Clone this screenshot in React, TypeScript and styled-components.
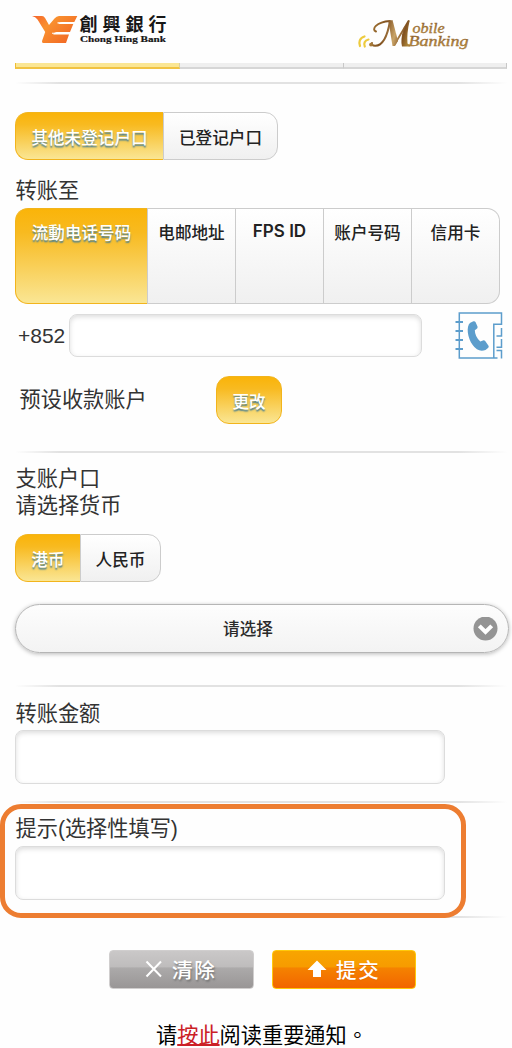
import React from "react";
import styled, { createGlobalStyle, css } from "styled-components";

const GlobalStyle = createGlobalStyle`
  * { box-sizing: border-box; }
  body {
    margin: 0;
    background: #fefefe;
    font-family: "Liberation Sans", "Noto Sans CJK SC", sans-serif;
    color: #333;
  }
`;

const Page = styled.main`
  width: 512px;
  height: 1048px;
  overflow: hidden;
  display: flex;
  flex-direction: column;
`;

const Header = styled.header`
  height: 63px;
  flex: none;
  display: flex;
  justify-content: space-between;
  padding: 10px 38px 0 30px;
`;

const Progress = styled.div`
  display: grid;
  grid-template-columns: 165px 164px 163px;
  height: 6px;
  flex: none;
  margin-left: 15px;
`;

const Step = styled.div<{ $active?: boolean }>`
  background: ${(p) => (p.$active ? "#fae694" : "#efefef")};
  border-right: 1px solid ${(p) => (p.$active ? "#d8cfa8" : "#c8c8c8")};
  border-bottom: 2px solid ${(p) => (p.$active ? "#f1c342" : "#d6d6d6")};
  border-left: ${(p) => (p.$active ? "1px solid #efbd33" : "0")};
`;

const Divider = styled.hr<{ $top: number }>`
  flex: none;
  width: 492px;
  height: 2px;
  border: 0;
  margin: ${(p) => p.$top}px 0 0 15px;
  background: linear-gradient(90deg, transparent, #e2e2e2 9%, #e2e2e2 90%, transparent);
`;

const Label = styled.label<{ $top?: number; $left?: number }>`
  flex: none;
  display: block;
  height: 27px;
  margin: ${(p) => p.$top ?? 0}px 0 0 ${(p) => p.$left ?? 15.5}px;
  font-size: 21.2px;
  line-height: 27px;
  white-space: nowrap;
`;

const amber = css`
  background: linear-gradient(#fab409, #f8ba20 25%, #fae694);
  border: 1.5px solid #f2b41c;
  color: #fff;
  text-shadow: 0 1.5px 1.5px #4c8093;
`;

const Segments = styled.div<{ $top: number; $height: number; $columns: string }>`
  flex: none;
  display: grid;
  grid-template-columns: ${(p) => p.$columns};
  width: max-content;
  height: ${(p) => p.$height}px;
  margin: ${(p) => p.$top}px 0 0 15px;
`;

const Segment = styled.button<{ $active?: boolean; $tall?: boolean }>`
  appearance: none;
  display: flex;
  justify-content: center;
  align-items: ${(p) => (p.$tall ? "flex-start" : "center")};
  padding: ${(p) => (p.$tall ? "11px 0 0" : "3px 0 0")};
  font: 500 16.6px/26px "Inter", "Noto Sans CJK SC", sans-serif;
  white-space: nowrap;
  color: #222;
  background: linear-gradient(#fff, #f0f0f0);
  border: 1.5px solid #ccc;
  border-left-width: 0;
  ${(p) => p.$active && amber}
  ${(p) => p.$active && "border-right-width: 0;"}
  &:first-child { border-radius: 13px 0 0 13px; }
  &:last-child { border-radius: 0 13px 13px 0; }
  &:nth-child(2) { border-left-width: 1px; }
`;

const LatinText = styled.span`
  font: 600 17px/22px "Inter", sans-serif;
`;

const PhoneRow = styled.div`
  flex: none;
  display: flex;
  height: 48px;
  margin-top: 8px;
  padding-left: 18px;
`;

const Prefix = styled.span`
  width: 51px;
  font-size: 21px;
  line-height: 47px;
`;

const Field = styled.input<{ $width: number; $height: number; $top?: number }>`
  flex: none;
  width: ${(p) => p.$width}px;
  height: ${(p) => p.$height}px;
  margin: ${(p) => p.$top ?? 0}px 0 0;
  padding: 0 10px;
  font-size: 20px;
  background: #fff;
  border: 1.5px solid #dcdcdc;
  border-radius: 8px;
  box-shadow: inset 0 2px 5px #ddd;
  outline: none;
`;

const WideField = styled(Field)<{ $left?: number }>`
  margin-left: ${(p) => p.$left ?? 0}px;
`;

const AccountRow = styled.div`
  flex: none;
  display: flex;
  height: 48px;
  margin: 16px 0 0 19.5px;
`;

const AccountLabel = styled.span`
  width: 196.5px;
  font-size: 21.2px;
  line-height: 48px;
`;

const ChangeButton = styled.button`
  width: 66px;
  height: 48px;
  padding: 2px 0 0;
  font: 500 16.6px/26px "Noto Sans CJK SC", sans-serif;
  ${amber}
  border-radius: 13px;
`;

const Select = styled.button`
  flex: none;
  display: grid;
  grid-template-columns: 36px 1fr 36px;
  align-items: center;
  width: 494px;
  height: 49px;
  margin: 22px 0 0 15px;
  padding: 0;
  border: 1.5px solid #b5b5b5;
  border-radius: 25px;
  background: linear-gradient(#fdfdfd, #f3f3f3);
  box-shadow: 0 1px 4px rgba(0, 0, 0, 0.28);
  font: 500 16.6px/26px "Noto Sans CJK SC", sans-serif;
  color: #2a2a2a;
`;

const SelectText = styled.span`
  grid-column: 2;
  padding: 0 28px 2px 0;
  text-align: center;
`;

const Highlight = styled.section`
  flex: none;
  width: 466px;
  height: 114px;
  margin-top: 1px;
  border: 5px solid #ed7d31;
  border-radius: 21px;
  display: flex;
  flex-direction: column;
  padding-left: 10px;
  position: relative;
  z-index: 1;
`;

const Actions = styled.div`
  flex: none;
  display: flex;
  gap: 18px;
  margin: 32px 0 0 109px;
`;

const Action = styled.button<{ $primary?: boolean }>`
  display: flex;
  align-items: center;
  gap: 9px;
  width: ${(p) => (p.$primary ? 144 : 145)}px;
  height: 39px;
  padding: 0 0 1px ${(p) => (p.$primary ? 34 : 35)}px;
  border: 1.5px solid ${(p) => (p.$primary ? "#ffc90c" : "#d0cece")};
  border-radius: 4px;
  background: ${(p) =>
    p.$primary
      ? "linear-gradient(#f8a500, #f79b00 44%, #f58300 45%, #f26500)"
      : "linear-gradient(#cac8c8, #bebcbc 44%, #acaaaa 45%, #999696)"};
  color: #fff;
  font: 500 20.5px/36px "Noto Sans CJK TC", sans-serif;
  letter-spacing: 1.8px;
  text-shadow: ${(p) => (p.$primary ? "0 1px 1px #e66a00" : "1px 2px 2px #777")};
`;

const Notice = styled.p`
  flex: none;
  margin: 29px 0 0 156px;
  font: 400 21.2px/32px "Noto Sans CJK TC", sans-serif;
  color: #000;
  white-space: nowrap;
`;

const NoticeLink = styled.a`
  color: #cb2026;
  text-decoration: underline;
  text-decoration-thickness: 1.5px;
  text-underline-offset: 1px;
`;

const PhonebookSvg = styled.svg`
  margin-left: 33px;
`;

const BankLogo = () => (
  <svg width="140" height="40" viewBox="30 10 140 40">
    <defs>
      <linearGradient id="flame" x1="0" y1="0" x2="1" y2="0.6">
        <stop offset="0" stopColor="#f6632b" />
        <stop offset="0.4" stopColor="#f9912f" />
        <stop offset="1" stopColor="#f26a25" />
      </linearGradient>
    </defs>
    <path
      fill="url(#flame)"
      d="M32 16H42Q44 16 45.2 18.2L49 25L54.5 18.5Q56.5 16 59 16H77.3L74.3 22H62Q59.5 22 58.3 24H73.3L70 32H56.5Q54 32 53.2 34.5H69L66 43H43.5Q41.5 43 42.2 40.5L45.2 32L37.5 19.5Q35.5 16.5 32 16Z"
    />
    <path d="M57.5 22.9H74.5M52 33.3H70" stroke="#fff" strokeWidth="1.1" />
    <text x="79.5" y="31" fontFamily="Noto Sans CJK TC, sans-serif" fontWeight="700" fontSize="18" textLength="87" fill="#171717">創興銀行</text>
    <text x="80" y="41.5" fontFamily="Liberation Serif, serif" fontWeight="700" fontSize="8.8" textLength="86" lengthAdjust="spacingAndGlyphs" fill="#171717" stroke="#171717" strokeWidth="0.2">Chong Hing Bank</text>
  </svg>
);

const MobileLogo = () => (
  <svg width="118" height="46" viewBox="356 10 118 46">
    <defs>
      <linearGradient id="bronze" gradientUnits="userSpaceOnUse" x1="371" y1="24" x2="411" y2="36">
        <stop offset="0" stopColor="#a37735" />
        <stop offset="0.35" stopColor="#80501f" />
        <stop offset="0.62" stopColor="#c9a468" />
        <stop offset="0.82" stopColor="#80501f" />
        <stop offset="1" stopColor="#b08a3c" />
      </linearGradient>
      <linearGradient id="gold" x1="0" y1="0" x2="0" y2="1">
        <stop offset="0" stopColor="#80501f" />
        <stop offset="1" stopColor="#c9a350" />
      </linearGradient>
    </defs>
    <g fill="none" stroke="#edcb3e" strokeWidth="2.2" strokeLinecap="round">
      <path d="M364.5 36.5C359.5 38 358.5 42 360 46" />
      <path d="M368.5 39.5C364.5 40.5 363.5 43.5 364.8 46.5" />
    </g>
    <g fill="none" stroke="url(#bronze)" strokeLinecap="round" strokeLinejoin="round">
      <path strokeWidth="2" d="M376 31.5C371 29.5 376 22 390 21C388 33 384 46 375 45.7C372.5 45.6 371 44 372 43" />
      <path strokeWidth="1.8" d="M394.5 44.5L408.5 21" />
    </g>
    <path fill="url(#bronze)" d="M388.5 21L392.5 20L398 41L395 46H392.5Z" />
    <path fill="url(#bronze)" d="M403.5 28L409.8 20Q406.5 34 407.5 43.5Q408 44.5 411 44.5L410 46.5H402Q400.3 40 403.5 28Z" />
    <circle cx="371" cy="44.6" r="1.9" fill="#a67937" />
    <g fontFamily="Liberation Serif, serif" fontStyle="italic" fill="url(#gold)" stroke="#98692f" strokeWidth="0.35">
      <text x="412.5" y="32.5" fontSize="14" textLength="32" lengthAdjust="spacingAndGlyphs">obile</text>
      <text x="408.5" y="46" fontSize="14.5" textLength="60" lengthAdjust="spacingAndGlyphs">Banking</text>
    </g>
  </svg>
);

const PhonebookIcon = () => (
  <PhonebookSvg width="48" height="48" viewBox="0 0 48 48">
    <g fill="none" stroke="#5c9dcc" strokeWidth="1.5">
      <path d="M46.5 13V1H4.3V46H38.8V12.3H46.8M46.5 16V24H41.5M46.5 27V35.3H41.5M46.5 46.5V38.5H41.5M38.8 46H42.5" />
      <path d="M.5 10H8M.5 19H8M.5 28H8M.5 37H8" strokeWidth="1.8" />
    </g>
    <path
      fill="#5c9dcc"
      d="M15.3 10.7L18.5 9.3Q19.7 8.8 20.5 10.1L22.5 14.5Q23 16 21.5 17L19.8 18.3Q20 25 25.3 29.4L28 28.4Q29.3 28 30.2 29.1L33.5 33.8Q34.3 35 33 36L30.5 38Q23 40.7 17.7 33C12.5 26 10.8 14 15.3 10.7Z"
    />
  </PhonebookSvg>
);

const ChevronIcon = () => (
  <svg width="26" height="24" viewBox="-1.5 0.5 26 24">
    <circle cx="12" cy="12" r="12" fill="#949494" />
    <path d="M5.8 9.3L12 15.5L18.2 9.3" fill="none" stroke="#fff" strokeWidth="4" />
  </svg>
);

const CrossIcon = () => (
  <svg width="18" height="18" viewBox="0 0 18 18">
    <path d="M1.5 1.5L16 16.5M16 1.5L1.5 16.5" stroke="#fff" strokeWidth="2" fill="none" />
  </svg>
);

const ArrowIcon = () => (
  <svg width="20" height="18" viewBox="0 0 20 18">
    <path d="M10 .5L19.5 10H14V17H6V10H.5Z" fill="#fff" />
  </svg>
);

export default function App() {
  return (
    <>
      <GlobalStyle />
      <Page>
        <Header>
          <BankLogo />
          <MobileLogo />
        </Header>
        <Progress>
          <Step $active />
          <Step />
          <Step />
        </Progress>
        <Divider $top={13} />

        <Segments $top={28} $height={48} $columns="148px 115px">
          <Segment $active>其他未登记户口</Segment>
          <Segment>已登记户口</Segment>
        </Segments>

        <Label $top={17}>转账至</Label>
        <Segments $top={4} $height={96} $columns="132px 89px 88px 88px 88px">
          <Segment $active $tall>流動电话号码</Segment>
          <Segment $tall>电邮地址</Segment>
          <Segment $tall><LatinText>FPS ID</LatinText></Segment>
          <Segment $tall>账户号码</Segment>
          <Segment $tall>信用卡</Segment>
        </Segments>

        <PhoneRow>
          <Prefix>+852</Prefix>
          <Field $width={353} $height={43} $top={2} aria-label="+852" />
          <PhonebookIcon />
        </PhoneRow>

        <AccountRow>
          <AccountLabel>预设收款账户</AccountLabel>
          <ChangeButton>更改</ChangeButton>
        </AccountRow>
        <Divider $top={27} />

        <Label $top={12}>支账户口</Label>
        <Label>请选择货币</Label>
        <Segments $top={15} $height={48} $columns="65px 81px">
          <Segment $active>港币</Segment>
          <Segment>人民币</Segment>
        </Segments>

        <Select>
          <SelectText>请选择</SelectText>
          <ChevronIcon />
        </Select>
        <Divider $top={32} />

        <Label $top={13}>转账金额</Label>
        <WideField $width={430} $height={54} $top={3} $left={15} aria-label="转账金额" />
        <Divider $top={17} />

        <Highlight>
          <Label $top={6} $left={0.5}>提示(选择性填写)</Label>
          <WideField $width={430} $height={54} $top={4} aria-label="提示" />
        </Highlight>
        <Divider $top={-2} />

        <Actions>
          <Action><CrossIcon />清除</Action>
          <Action $primary><ArrowIcon />提交</Action>
        </Actions>

        <Notice>
          请<NoticeLink>按此</NoticeLink>阅读重要通知。
        </Notice>
      </Page>
    </>
  );
}
